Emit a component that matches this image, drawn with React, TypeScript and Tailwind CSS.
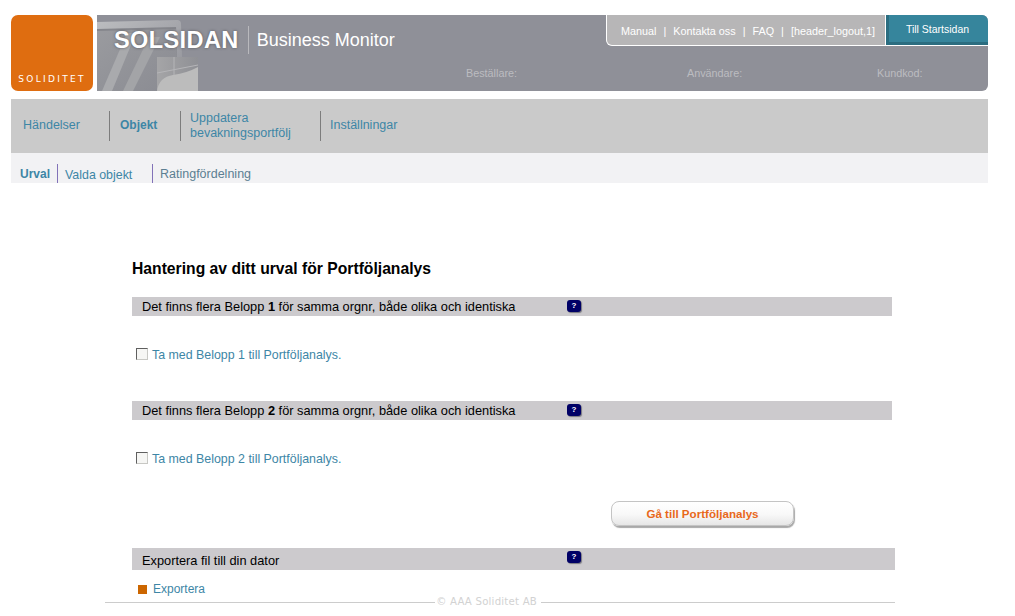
import { Fragment } from "react";

const font = "font-['Liberation_Sans',Arial,sans-serif]";

function HeaderArt() {
  return (
    <svg width="110" height="76" viewBox="0 0 110 76" className="absolute left-0 top-0">
      <defs>
        <linearGradient id="frame" x1="0" y1="0" x2="1" y2="1">
          <stop offset="0" stopColor="#bcbdc0" />
          <stop offset="1" stopColor="#8f9097" />
        </linearGradient>
        <linearGradient id="glass" x1="0" y1="0" x2="1" y2="1">
          <stop offset="0" stopColor="#9a9b9f" />
          <stop offset="1" stopColor="#8a8b92" />
        </linearGradient>
        <linearGradient id="sheet" x1="0" y1="0" x2="1" y2="0">
          <stop offset="0" stopColor="#a5a5a7" />
          <stop offset="1" stopColor="#8f9095" />
        </linearGradient>
      </defs>
      <path d="M0 7 L80 5 Q84 5 84 9 L86 76 L0 76 Z" fill="url(#frame)" />
      <path d="M0 14 L79 12 L81 76 L0 76 Z" fill="#85868c" />
      <path d="M0 16 L79 14 L81 76 L0 76 Z" fill="url(#glass)" />
      <path d="M5 76 L30 18 L39 18 L15 76 Z" fill="#a9aaad" />
      <path d="M26 76 L52 22 L63 22 L36 76 Z" fill="#a3a4a7" />
      <rect x="60" y="42" width="41" height="34" fill="url(#sheet)" />
      <path d="M60 76 Q62 62 76 60 Q90 58 101 52 L101 76 Z" fill="#bcbcbc" />
      <path d="M60 58 L101 50 M77 42 L77 60" stroke="#b5b5b8" strokeWidth="1" fill="none" />
    </svg>
  );
}

function HelpBadge() {
  return (
    <span className="flex h-[12px] w-[14px] items-center justify-center rounded-[3px] bg-[#000066] text-[8px] font-bold leading-none text-white shadow-[1px_1px_1px_#77777f]">
      ?
    </span>
  );
}

function SectionBar({ children, wide }: { children: React.ReactNode; wide?: boolean }) {
  return (
    <div
      className={
        wide
          ? "flex h-[22px] w-[763px] items-center bg-[#cccacd] pl-[10px] text-[12.8px] text-black"
          : "flex h-[19px] w-[760px] items-center bg-[#cccacd] pl-[10px] text-[12.8px] text-black"
      }
    >
      <span className={wide ? "w-[425px] whitespace-nowrap pt-[3px]" : "w-[425px] whitespace-nowrap"}>{children}</span>
      <span className={wide ? "-mt-[4px]" : "-mt-[2px]"}>
        <HelpBadge />
      </span>
    </div>
  );
}

function Check({ label }: { label: string }) {
  return (
    <div className="flex h-[14px] items-center pl-[4px] text-[12.4px] text-[#3d86a6]">
      <span className="mr-[4px] -mt-[2px] h-[12px] w-[12px] border border-[#c8c8c4] border-l-[#5f5f5f] border-t-[#5f5f5f] bg-[#f6f6f4]" />
      {label}
    </div>
  );
}

export default function App() {
  const links = ["Manual", "Kontakta oss", "FAQ", "[header_logout,1]"];
  return (
    <div className={`h-[616px] w-[1015px] overflow-hidden bg-white pt-[15px] ${font}`}>
      {/* top */}
      <div className="ml-[11px] flex h-[76px] w-[977px] gap-[4px]">
        <div className="flex w-[82px] flex-col items-center justify-end rounded-[7px] bg-[#df6d10] pb-[6px] font-['DejaVu_Sans',sans-serif] text-[9px] leading-[11px] tracking-[2.3px] text-white">
          SOLIDITET
        </div>
        <div className="relative flex flex-1 flex-col rounded-br-[6px] rounded-tr-[6px] bg-[#8f9098]">
          <HeaderArt />
          <div className="relative flex h-[31px] items-start justify-between">
            <div className="flex items-center pl-[17px] pt-[11px]">
              <span className="text-[23.5px] font-bold leading-[28px] tracking-[0.4px] text-white [text-shadow:0_0_3px_#55555a]">
                SOLSIDAN
              </span>
              <span className="ml-[9px] h-[28px] w-px bg-[#b9b9bd]" />
              <span className="ml-[8px] text-[18px] leading-[28px] text-white">Business Monitor</span>
            </div>
            <div className="flex">
              <div className="flex h-[31px] w-[280px] items-center rounded-bl-[6px] border-b border-l border-r border-white bg-[#b7b6b7] pl-[14px] pt-[2px] text-[10.8px] text-white">
                {links.map((l, i) => (
                  <Fragment key={l}>
                    <span>{l}</span>
                    {i < links.length - 1 && <span className="mx-[7px]">|</span>}
                  </Fragment>
                ))}
              </div>
              <div className="flex h-[30px] w-[102px] items-center justify-center rounded-tr-[6px] border-b-[3px] border-l-[3px] border-b-[#2b6d80] border-l-[#2b6d80] bg-[#36859c] pr-[2px] pt-[3px] text-[10.5px] text-white shadow-[0_1px_0_#ffffff]">
                Till Startsidan
              </div>
            </div>
          </div>
          <div className="relative mt-[19px] flex text-[10.8px] text-[#bcbcc0]">
            <span className="ml-[369px] w-[221px]">Beställare:</span>
            <span className="w-[190px]">Användare:</span>
            <span>Kundkod:</span>
          </div>
        </div>
      </div>

      {/* main nav */}
      <nav className="ml-[11px] mt-[8px] flex h-[54px] w-[977px] items-center bg-[#cacaca] text-[12.5px] leading-[15px] text-[#3d86a6]">
        <div className="flex h-[30px] w-[99px] items-center border-r border-[#7d7d7d] pb-[2px] pl-[12px]">Händelser</div>
        <div className="flex h-[30px] w-[71px] items-center border-r border-[#7d7d7d] pb-[2px] pl-[10px] text-[12px] font-bold">Objekt</div>
        <div className="flex h-[30px] w-[140px] items-center border-r border-[#7d7d7d] pl-[9px]">
          <span>
            Uppdatera
            <br />
            bevakningsportfölj
          </span>
        </div>
        <div className="pb-[2px] pl-[9px]">Inställningar</div>
      </nav>

      {/* sub nav */}
      <div className="ml-[11px] flex h-[30px] w-[977px] items-end bg-[#f2f2f4] pl-[9px] text-[12.4px] text-[#3d86a6]">
        <div className="h-[19px] w-[37px] pt-[1px] text-[12px] font-bold">Urval</div>
        <div className="h-[19px] w-[95px] border-l border-[#8272b8] pl-[7px] pt-[2px]">Valda objekt</div>
        <div className="h-[19px] border-l border-[#8272b8] pl-[7px] pt-[1px] text-[12.5px] text-[#5c7f92]">Ratingfördelning</div>
      </div>

      {/* content */}
      <main className="ml-[132px] pt-[77px]">
        <h1 className="text-[15.7px] font-bold leading-[18px] text-black">Hantering av ditt urval för Portföljanalys</h1>
        <div className="mt-[19px]">
          <SectionBar>
            Det finns flera Belopp <b>1</b> för samma orgnr, både olika och identiska
          </SectionBar>
        </div>
        <div className="mt-[32px]">
          <Check label="Ta med Belopp 1 till Portföljanalys." />
        </div>
        <div className="mt-[39px]">
          <SectionBar>
            Det finns flera Belopp <b>2</b> för samma orgnr, både olika och identiska
          </SectionBar>
        </div>
        <div className="mt-[32px]">
          <Check label="Ta med Belopp 2 till Portföljanalys." />
        </div>
        <button className="ml-[479px] mt-[35px] flex h-[25px] w-[183px] items-center justify-center rounded-[8px] border border-[#c4c4c4] bg-[linear-gradient(#ffffff_0%,#f8f8f8_55%,#e6e6e6_100%)] text-[11.6px] font-bold text-[#e8681a] shadow-[1px_2px_1px_#a8a8a8]">
          Gå till Portföljanalys
        </button>
        <div className="mt-[22px]">
          <SectionBar wide>Exportera fil till din dator</SectionBar>
        </div>
        <div className="mt-[12px] flex h-[14px] items-center pl-[6px] text-[12px] text-[#3d86a6]">
          <span className="mr-[6px] h-[9px] w-[9px] bg-[#cc6600]" />
          Exportera
        </div>
      </main>

      {/* footer */}
      <footer className="ml-[105px] flex w-[790px] items-center leading-[12px] text-[#d2d2d2]">
        <span className="h-px flex-1 bg-[#cccccc]" />
        <span className="mx-[1px] font-['DejaVu_Sans',sans-serif] text-[10.2px] tracking-[0.2px]">© AAA Soliditet AB</span>
        <span className="ml-[3px] h-px w-[354px] bg-[#cccccc]" />
      </footer>
    </div>
  );
}
